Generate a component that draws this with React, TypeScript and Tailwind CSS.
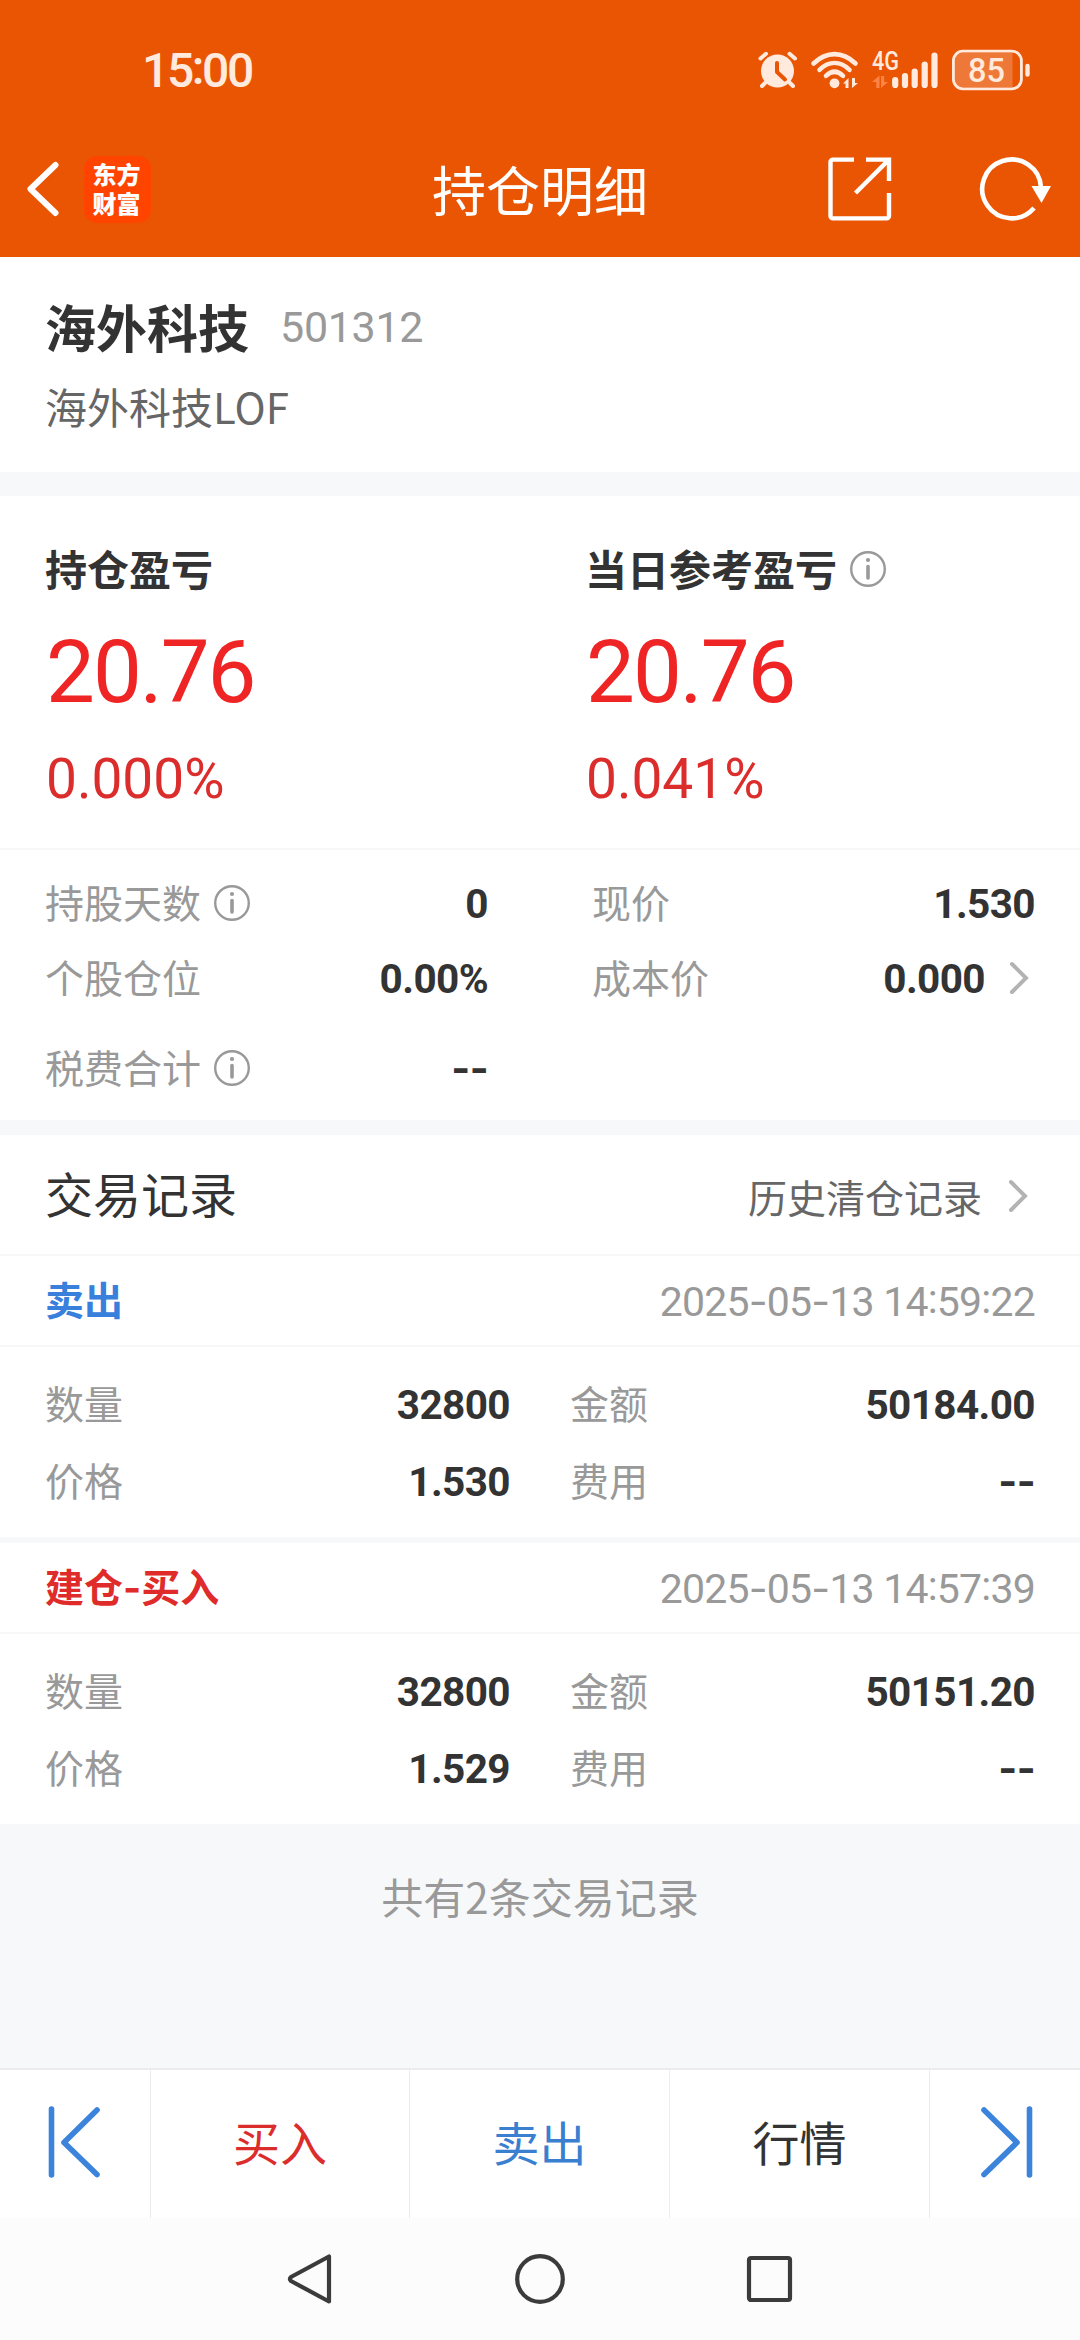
import type { ReactNode } from "react";

type Trade = {
  side: "buy" | "sell";
  title: string;
  time: string;
  qty: string;
  amount: string;
  price: string;
  fee: string;
};

const trades: Trade[] = [
  {
    side: "sell",
    title: "卖出",
    time: "2025-05-13 14:59:22",
    qty: "32800",
    amount: "50184.00",
    price: "1.530",
    fee: "--",
  },
  {
    side: "buy",
    title: "建仓-买入",
    time: "2025-05-13 14:57:39",
    qty: "32800",
    amount: "50151.20",
    price: "1.529",
    fee: "--",
  },
];

// Figures are set in Roboto; dashes borrow Inter's wider form and colons are raised.
function Figures({ children, className = "" }: { children: string; className?: string }) {
  return (
    <span className={`whitespace-pre font-[Roboto,sans-serif] ${className}`}>
      {children.split(/([-:])/).map((part, i) => {
        if (part === "-") {
          return (
            <span key={i} className="font-[Inter,sans-serif]">
              -
            </span>
          );
        }
        if (part === ":") {
          return (
            <span key={i} className="align-[3px] leading-none">
              :
            </span>
          );
        }
        return part;
      })}
    </span>
  );
}

function InfoIcon() {
  return (
    <svg width="36" height="36" viewBox="0 0 36 36" fill="none" stroke="#999" className="shrink-0">
      <circle cx="18" cy="18" r="16.8" strokeWidth="2.4" />
      <circle cx="18" cy="9" r="2.1" fill="#999" stroke="none" />
      <path d="M18 15.5V27" strokeWidth="3.6" strokeLinecap="round" />
    </svg>
  );
}

function ChevronIcon() {
  return (
    <svg width="20" height="34" viewBox="0 0 20 34" fill="none" className="shrink-0">
      <path d="M3 3 17 17 3 31" stroke="#b3b3b3" strokeWidth="4" strokeLinecap="round" />
    </svg>
  );
}

function StatusIcons() {
  return (
    <svg width="284" height="62" viewBox="756 38 284 62" fill="none" stroke="#ffeadd">
      {/* alarm */}
      <circle cx="777.5" cy="70" r="16.5" fill="#ffeadd" stroke="none" />
      <path d="M760.5 57.5 766 52.8M795 57.5l-5.5-4.7" strokeWidth="4" strokeLinecap="round" />
      <path d="m767 80-5 5M788 80l5 5" strokeWidth="4" strokeLinecap="round" />
      <path d="M777 62v9l8 7.5" stroke="#ea5504" strokeWidth="4" strokeLinecap="round" strokeLinejoin="round" />
      {/* wifi */}
      <g strokeWidth="4.6" strokeLinecap="round">
        <path d="M813.5 62.5c13-12.5 29-12.5 42 0" />
        <path d="M819.5 68.8c9.5-9 20.5-9 30 0" />
        <path d="M826 74.8c5.5-5.2 11.5-5.2 17 0" />
      </g>
      <circle cx="834.5" cy="82.3" r="4.9" fill="#ffeadd" stroke="none" />
      <path d="M843 82.5 848.500 77v10h-3v-4.500zM858 82l-6 5v-10h3v5z" fill="#ffeadd" stroke="none" />
      {/* mobile data */}
      <text
        x="872"
        y="69"
        fill="#ffeadd"
        stroke="none"
        className="font-[Roboto,sans-serif] text-[25px] font-medium"
        textLength="27"
        lengthAdjust="spacingAndGlyphs"
      >
        4G
      </text>
      <path d="M872 81l7.5-6.5V87h-3.2v-6zM888 81 881 87V75h3.2v6z" fill="#fb8345" stroke="none" />
      <path
        d="M895.2 79v5M905 75v9M914.7 70.5V84M924.7 63.5V84M934.5 54.5V84"
        strokeWidth="6.2"
        strokeLinecap="round"
      />
      {/* battery */}
      <path d="M962 52h50.5v34H962a8 8 0 0 1-8-8V60a8 8 0 0 1 8-8z" fill="#ee7838" stroke="none" />
      <rect x="953.4" y="50.2" width="68" height="37.6" rx="9.5" strokeWidth="2.8" />
      <path d="M1027.5 65v8.5" strokeWidth="4.4" strokeLinecap="round" />
      <text
        x="968"
        y="81"
        fill="#ffeadd"
        stroke="none"
        className="font-[Roboto,sans-serif] text-[34px] font-medium"
        textLength="37"
        lengthAdjust="spacingAndGlyphs"
      >
        85
      </text>
    </svg>
  );
}

function Header() {
  return (
    <header className="flex h-[257px] flex-col bg-[#ea5504] text-white">
      <div className="flex h-[140px] items-center justify-between pr-10 pl-[142px]">
        <Figures className="pt-[2px] text-[48px] font-medium tracking-[-2.4px] text-[#ffeadd]">
          15:00
        </Figures>
        <StatusIcons />
      </div>
      <div className="grid h-[98px] grid-cols-3 items-center">
        <div className="flex items-center gap-6 pl-[26px]">
          <svg width="34" height="56" viewBox="0 0 34 56" fill="none" stroke="#fff" strokeWidth="6">
            <path d="M29.5 4 4.5 28l25 24" strokeLinecap="round" strokeLinejoin="round" />
          </svg>
          <div className="flex size-[67px] justify-center rounded-[13px] bg-[#ff4400] pt-[3px] pr-[2px]">
            <span className="w-12 text-[24px] leading-[29px] font-black break-all">东方财富</span>
          </div>
        </div>
        <h1 className="text-center text-[54px] leading-none">持仓明细</h1>
        <div className="flex items-center justify-end gap-[85px] pr-[29px]">
          <svg width="64" height="64" viewBox="0 0 64 64" fill="none" stroke="#fff" strokeWidth="4.4">
            <path d="M26 2.6H5a2.5 2.5 0 0 0-2.5 2.5v53.8a2.5 2.5 0 0 0 2.5 2.5h53.5a2.5 2.5 0 0 0 2.5-2.5V36" />
            <path d="M38 2.6h23V24M61 2.6 27.5 36" />
          </svg>
          <svg width="74" height="66" viewBox="0 0 74 66" fill="none" stroke="#fff">
            <path d="M64 31.5A29.4 29.4 0 1 0 57 52" strokeWidth="4.6" />
            <path d="M54.5 30h19.5L64.5 47z" fill="#fff" stroke="none" />
          </svg>
        </div>
      </div>
    </header>
  );
}

type ProfitColumnProps = {
  label: string;
  value: string;
  percent: string;
  info?: boolean;
};

function ProfitColumn({ label, value, percent, info }: ProfitColumnProps) {
  return (
    <div className="flex flex-col pt-[45px] pl-[46px]">
      <div className="flex h-14 items-center text-[42px] font-bold text-[#333]">
        <span className="-mt-1 -ml-px pr-[13px]">{label}</span>
        {info && <InfoIcon />}
      </div>
      <Figures className="mt-[30px] text-[87px] leading-[90px] tracking-[-2px] text-[#ee2524]">
        {value}
      </Figures>
      <Figures className="mt-[32px] text-[55px] leading-[60px] text-[#dc2d2d]">{percent}</Figures>
    </div>
  );
}

type FieldProps = {
  label: string;
  value: string;
  info?: boolean;
  trailing?: ReactNode;
};

function Field({ label, value, info, trailing }: FieldProps) {
  return (
    <div className="flex items-center justify-between">
      <span className="flex items-center text-[39px] leading-none text-[#999]">
        <span className="-mt-[3px] -ml-px pr-[13px]">{label}</span>
        {info && <InfoIcon />}
      </span>
      <span className="-mr-px flex items-center gap-6">
        <Figures className="pt-[3px] text-[40.5px] leading-none font-bold tracking-[-0.6px] text-[#333]">
          {value}
        </Figures>
        {trailing}
      </span>
    </div>
  );
}

function TradeRecord({ trade }: { trade: Trade }) {
  return (
    <article className="bg-white">
      <div className="flex h-[91px] items-center justify-between border-b-2 border-[#f7f7f8] px-[45px]">
        <span
          className={`pt-[2px] font-[Inter,'Noto_Sans_CJK_SC',sans-serif] text-[39px] font-bold ${trade.side === "buy" ? "text-[#e02b2b]" : "text-[#3880dc]"}`}
        >
          {trade.title}
        </span>
        <Figures className="pt-[3px] text-[41px] tracking-[-0.8px] text-[#999]">{trade.time}</Figures>
      </div>
      <div className="grid h-[190px] grid-cols-[463px_463px] grid-rows-[77px_77px] gap-x-[62px] pt-[18px] pl-[46px]">
        <Field label="数量" value={trade.qty} />
        <Field label="金额" value={trade.amount} />
        <Field label="价格" value={trade.price} />
        <Field label="费用" value={trade.fee} />
      </div>
    </article>
  );
}

function BottomBar() {
  return (
    <nav className="grid h-[150px] grid-cols-[151px_259px_260px_260px_150px] border-t-2 border-[#ececee] bg-white text-[47px]">
      <button className="flex items-center justify-center border-r border-[#ececee] pr-[3px] pb-1">
        <svg width="54" height="74" viewBox="0 0 54 74" fill="none" stroke="#3b83db" strokeWidth="5.6">
          <path d="M4.5 4v66M50 5 17 37.5l33 32" strokeLinecap="round" strokeLinejoin="round" />
        </svg>
      </button>
      <button className="border-r border-[#ececee] pb-[5px] text-[#dc2d2d]">买入</button>
      <button className="border-r border-[#ececee] pb-[5px] text-[#3a7fd0]">卖出</button>
      <button className="border-r border-[#ececee] pb-[5px] text-[#333]">行情</button>
      <button className="flex items-center justify-center pb-1 pl-[3px]">
        <svg width="54" height="74" viewBox="0 0 54 74" fill="none" stroke="#3b83db" strokeWidth="5.6">
          <path d="M49.5 4v66M4 5l33 32.5L4 69.5" strokeLinecap="round" strokeLinejoin="round" />
        </svg>
      </button>
    </nav>
  );
}

function SystemNav() {
  return (
    <div className="flex h-[122px] items-center justify-center gap-[178px] bg-[#fcfcfc]">
      <svg width="50" height="52" viewBox="0 0 50 52" fill="none" stroke="#3b3b3b" strokeWidth="4.2">
        <path d="M43 3.5v45L5 28q-2-2 0-4z" strokeLinejoin="round" />
      </svg>
      <svg width="52" height="52" viewBox="0 0 52 52" fill="none" stroke="#3b3b3b" strokeWidth="4.2">
        <circle cx="26" cy="26" r="22.8" />
      </svg>
      <svg width="50" height="52" viewBox="0 0 50 52" fill="none" stroke="#3b3b3b" strokeWidth="4.2">
        <rect x="5" y="5" width="41" height="42" rx="2" />
      </svg>
    </div>
  );
}

export default function App() {
  return (
    <div className="flex h-[2340px] w-[1080px] flex-col overflow-hidden bg-[#f7f8fa] font-['Noto_Sans_CJK_SC',sans-serif]">
      <Header />

      <section className="flex h-[215px] flex-col bg-white px-[45px] pt-[38px]">
        <div className="flex h-[62px] items-center gap-[31px]">
          <h2 className="text-[51px] font-bold text-[#333]">海外科技</h2>
          <Figures className="pt-[3px] text-[43px] tracking-[-0.3px] text-[#999]">501312</Figures>
        </div>
        <p className="mt-[18px] text-[42px] leading-[62px] text-[#666]">海外科技LOF</p>
      </section>

      <section className="mt-6 grid h-[354px] grid-cols-2 border-b-2 border-[#f7f7f8] bg-white">
        <ProfitColumn label="持仓盈亏" value="20.76" percent="0.000%" />
        <ProfitColumn label="当日参考盈亏" value="20.76" percent="0.041%" info />
      </section>

      <section className="grid h-[270px] grid-cols-[441px_441px] grid-rows-[75px_75px_105px] gap-x-[106px] bg-white pt-[15px] pl-[46px]">
        <Field label="持股天数" value="0" info />
        <Field label="现价" value="1.530" />
        <Field label="个股仓位" value="0.00%" />
        <div className="grid pr-[6px]">
          <Field label="成本价" value="0.000" trailing={<ChevronIcon />} />
        </div>
        <Field label="税费合计" value="--" info />
      </section>

      <section className="mt-[15px] flex h-[121px] items-center justify-between border-b-2 border-[#f7f7f8] bg-white pr-[52px] pl-[45px]">
        <h3 className="-mt-[5px] text-[48px] text-[#333]">交易记录</h3>
        <span className="flex items-center gap-[26px] pt-[3px] text-[39px] text-[#666]">
          历史清仓记录
          <ChevronIcon />
        </span>
      </section>

      <div className="flex flex-col gap-[6px]">
        {trades.map((trade) => (
          <TradeRecord key={trade.time} trade={trade} />
        ))}
      </div>

      <p className="pt-[41px] text-center text-[42px] leading-[62px] text-[#999]">
        共有2条交易记录
      </p>

      <div className="mt-auto">
        <BottomBar />
        <SystemNav />
      </div>
    </div>
  );
}
